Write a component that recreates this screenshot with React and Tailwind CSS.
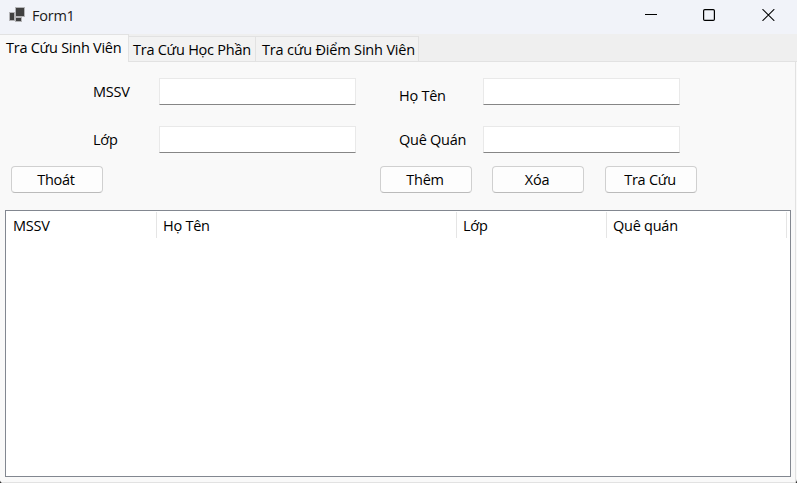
import React from "react";

function FormIcon() {
  return (
    <svg width="16" height="16" viewBox="0 0 16 16" shapeRendering="crispEdges">
      <g fill="#b4b4b7">
        <rect x="0" y="5" width="6" height="9" />
        <rect x="6" y="0" width="10" height="10" />
        <rect x="6" y="10" width="7" height="5" />
      </g>
      <g fill="#404040">
        <rect x="1" y="6" width="4" height="7" />
        <rect x="7" y="1" width="8" height="8" />
        <rect x="7" y="11" width="5" height="3" />
      </g>
    </svg>
  );
}

function TitleBar() {
  return (
    <header className="flex h-[34px] shrink-0 items-start bg-[#f1f3f9]">
      <div className="ml-[9px] mt-[7px]">
        <FormIcon />
      </div>
      <span className="ml-[7px] mt-[6px] text-[#1a1a1a]">Form1</span>
      <div className="ml-auto mr-[22px] mt-[9px] flex gap-[46px] text-black">
        <svg width="12" height="12" viewBox="0 0 12 12">
          <path d="M0 5.5H12" stroke="currentColor" />
        </svg>
        <svg width="12" height="12" viewBox="0 0 12 12" fill="none">
          <rect x="0.6" y="0.6" width="10.8" height="10.8" rx="1.2" stroke="currentColor" strokeWidth="1.2" />
        </svg>
        <svg className="ml-px" width="13" height="12" viewBox="0 0 13 12">
          <path d="M0.5 0.2L12.3 11.8M12.3 0.2L0.5 11.8" stroke="currentColor" strokeWidth="1.1" />
        </svg>
      </div>
    </header>
  );
}

function Tabs() {
  return (
    <nav className="flex h-[28px] shrink-0 items-end bg-[#efefef]">
      <div className="h-[28px] w-[129px] border-r border-t border-[#e2e2e2] bg-[#f9f9f9] pl-[6px] pt-[3px]">
        Tra Cứu Sinh Viên
      </div>
      <div className="h-[26px] w-[127px] border-y border-r border-[#e2e2e2] bg-[#f2f2f2] pl-[4px] pt-[3px]">
        Tra Cứu Học Phần
      </div>
      <div className="h-[26px] w-[163px] border-y border-r border-[#e2e2e2] bg-[#f2f2f2] pl-[6px] pt-[3px] tracking-[-0.18px]">
        Tra cứu Điểm Sinh Viên
      </div>
      <div className="h-px flex-1 bg-[#e2e2e2]" />
    </nav>
  );
}

function Field() {
  return (
    <input className="block h-[27px] w-[197px] border border-[#e9e9e9] border-b-[#868686] bg-white px-1 outline-none" />
  );
}

function Button({ className = "", children }) {
  return (
    <button
      className={
        "flex h-[27px] w-[92px] items-center justify-center rounded-[4px] border border-[#d0d0d0] border-b-[#bbbbbb] bg-[#fdfdfd] pr-[2px] " +
        className
      }
    >
      {children}
    </button>
  );
}

function ListView() {
  return (
    <section className="ml-[5px] mt-[17px] h-[267px] w-[786px] border border-[#828790] bg-white pt-px">
      <div className="flex h-[26px] leading-[20px]">
        <div className="w-[151px] border-r border-[#e5e5e5] pl-[7px] pt-[4px]">MSSV</div>
        <div className="w-[300px] border-r border-[#e5e5e5] pl-[6px] pt-[4px]">Họ Tên</div>
        <div className="w-[150px] border-r border-[#e5e5e5] pl-[6px] pt-[4px]">Lớp</div>
        <div className="w-[180px] border-r border-[#e5e5e5] pl-[6px] pt-[4px]">Quê quán</div>
      </div>
    </section>
  );
}

export default function App() {
  return (
    <div className="h-[483px] w-[797px] overflow-hidden bg-[#333]">
      <div className="flex h-full w-full flex-col overflow-hidden rounded-b-[4px] bg-[#f9f9f9] font-['Open_Sans','Noto_Sans',sans-serif] text-[14.5px] leading-[20px] tracking-[-0.25px] whitespace-nowrap text-black">
        <TitleBar />
        <Tabs />
        <main className="mr-px flex-1 border-b border-r border-[#e2e2e2] bg-[#f9f9f9]">
          <div className="flex h-[48px] pt-[16px]">
            <div className="w-[159px] pl-[93px] pt-[4px]">MSSV</div>
            <Field />
            <div className="w-[127px] pl-[43px] pt-[8px]">Họ Tên</div>
            <Field />
          </div>
          <div className="flex h-[56px] pt-[16px]">
            <div className="w-[159px] pl-[93px] pt-[4px]">Lớp</div>
            <Field />
            <div className="w-[127px] pl-[43px] pt-[4px]">Quê Quán</div>
            <Field />
          </div>
          <div className="flex h-[27px]">
            <Button className="ml-[11px]">Thoát</Button>
            <Button className="ml-[277px]">Thêm</Button>
            <Button className="ml-[20px]">Xóa</Button>
            <Button className="ml-[21px]">Tra Cứu</Button>
          </div>
          <ListView />
        </main>
      </div>
    </div>
  );
}
